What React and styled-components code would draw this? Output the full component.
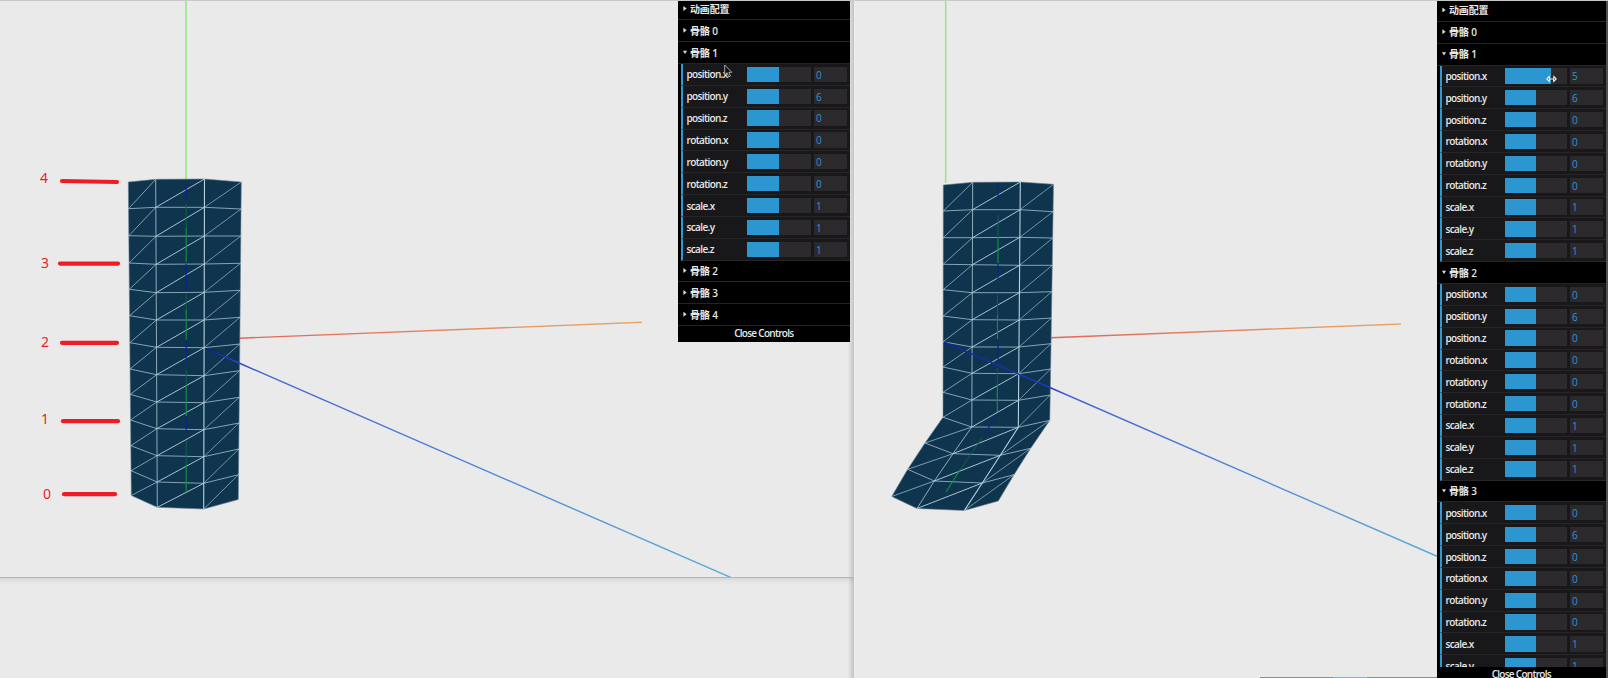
import React from 'react';
import styled, { createGlobalStyle } from 'styled-components';

const Global = createGlobalStyle`
  * { box-sizing: border-box; }
  body { margin: 0; background: #eaeaea; overflow: hidden; }
`;

const Page = styled.main`
  display: flex;
  width: 1608px;
  height: 678px;
  overflow: hidden;
  background: #eaeaea;
  font-family: 'Open Sans', 'Noto Sans CJK SC', sans-serif;
`;

const LeftColumn = styled.div`
  display: flex;
  flex-direction: column;
  width: 854px;
  background: linear-gradient(to right, transparent 848px, #c2c2c2 854px);
`;

const Viewport = styled.section`
  position: relative;
  display: flex;
  justify-content: flex-end;
  align-items: flex-start;
  width: ${(p) => p.$width}px;
  height: ${(p) => p.$height}px;
  overflow: hidden;
  border-top: 1px solid #c8c8c8;
  border-bottom: ${(p) => (p.$framed ? '1px solid #b4b4b4' : '0')};
  border-left: ${(p) => (p.$framed ? '0' : '1px solid #efefef')};
  padding-right: ${(p) => p.$edge}px;
`;

const Backdrop = styled.div`
  flex: 1;
  background: linear-gradient(rgba(0, 0, 0, 0.08), rgba(0, 0, 0, 0.02) 4px, transparent 8px);
`;

const Scene = styled.svg`
  position: absolute;
  top: -1px;
  left: ${(p) => p.$left}px;
  overflow: visible;
`;

const Edge = styled.div`
  position: absolute;
  top: 0;
  bottom: 0;
  right: 0;
  width: 2.5px;
  background: #505050;
`;

const Panel = styled.aside`
  position: relative;
  display: flex;
  flex-direction: column;
  width: ${(p) => p.$width}px;
  margin-top: ${(p) => p.$shift}px;
  background: #000;
  color: #e8e8e8;
  font-size: 10px;
  font-weight: 600;
`;

const Rows = styled.div`
  height: ${(p) => p.$height};
  overflow: hidden;
`;

const FolderTitle = styled.div`
  display: flex;
  align-items: center;
  height: 21.85px;
  padding: 0 0 1px 5px;
  gap: 3px;
  background: #000;
  border-bottom: 1px solid #242424;
  white-space: pre;
  letter-spacing: -0.15px;
`;

const Arrow = styled.i`
  width: 4px;
  height: 5px;
  background: #ddd;
  clip-path: ${(p) => (p.$open ? 'polygon(0 25%, 100% 25%, 50% 90%)' : 'polygon(10% 0, 90% 50%, 10% 100%)')};
`;

const ControlRow = styled.div`
  display: flex;
  align-items: center;
  height: 21.85px;
  margin-left: ${(p) => p.$indent}px;
  padding-left: 4px;
  border-left: 2px solid #2d9ad2;
  border-bottom: 1px solid #262628;
  background: #18181a;
`;

const Label = styled.span`
  width: ${(p) => p.$width}px;
  letter-spacing: -0.62px;
`;

const Slider = styled.div`
  width: ${(p) => p.$width}px;
  height: 15.3px;
  background: #2c2a2d;
`;

const Fill = styled.div`
  height: 100%;
  background: #2b96d0;
`;

const Value = styled.div`
  width: 33px;
  height: 15.3px;
  margin-left: 3px;
  padding-left: 2px;
  background: #2b292c;
  color: #2d97cc;
  line-height: 16.5px;
  font-weight: 400;
`;

const CloseButton = styled.div`
  height: 15.5px;
  line-height: 15px;
  text-align: center;
  letter-spacing: -0.72px;
`;

const BehindWindow = styled.div`
  position: absolute;
  bottom: 0;
  left: 405px;
  right: 0;
  height: 1px;
  display: flex;
  background: #8d8d8d;
`;

const BehindFill = styled.i`
  width: 34px;
  height: 1px;
  margin-left: 73px;
  background: #72b6d6;
`;

const KEYS = ['position.x', 'position.y', 'position.z', 'rotation.x', 'rotation.y', 'rotation.z', 'scale.x', 'scale.y', 'scale.z'];
const BASE = [0, 6, 0, 0, 0, 0, 1, 1, 1];

function Folder({ title, values, dims }) {
  return (
    <>
      <FolderTitle><Arrow $open={!!values} />{title}</FolderTitle>
      {values && values.map((v, i) => (
        <ControlRow key={KEYS[i]} $indent={dims.indent}>
          <Label $width={dims.label}>{KEYS[i]}</Label>
          <Slider $width={dims.slider}>
            <Fill style={{ width: `${v === 5 ? 74 : 50}%` }} />
          </Slider>
          <Value>{v}</Value>
        </ControlRow>
      ))}
    </>
  );
}

const path = (pts) => 'M' + pts.map((p) => p.join(' ')).join('L');
const column = (x0, x1, ys) => ys.map((y, i) => [x0 + ((x1 - x0) * i) / (ys.length - 1), y]);

const STRAIGHT = [
  column(128.3, 131.3, [182, 208.7, 235.7, 263, 289.3, 315.7, 342.7, 369, 394.3, 420, 445.7, 470.7, 495.5]),
  column(155.7, 157.3, [179.3, 207.3, 236.3, 264.3, 292.7, 320, 347.3, 374.7, 402, 428.7, 455.7, 482, 507.3]),
  column(204.5, 203.7, [179, 207.3, 236, 264, 292.3, 320, 347.7, 375.7, 402.7, 429.7, 456.7, 483.3, 509]),
  column(241.3, 238.3, [182, 209, 236, 263.3, 290.3, 317.3, 344, 370.7, 397.3, 423, 449, 474.7, 499.5]),
];

const BENT = [
  [...column(943.3, 943, [185, 211, 237.7, 264.3, 289.7, 316, 341.7, 367, 392.3, 417.3]), [925, 443], [907.7, 469.3], [891.7, 496.5]],
  [...column(972.7, 971.8, [182.3, 209.7, 237.7, 264.7, 292.7, 319.7, 347, 373.3, 400, 427]), [953, 453.7], [934.3, 481], [917, 508.5]],
  [...column(1020.3, 1018.3, [182, 209.7, 237.3, 265.3, 292.7, 320, 347, 373.7, 400.3, 427.3]), [1000.3, 455.3], [982.3, 483], [964.3, 510.5]],
  [...column(1053.5, 1049.8, [184.3, 211.7, 238, 265.3, 291.7, 318, 343.7, 369, 395, 420.3]), [1030.7, 448.3], [1014, 474.7], [998.3, 501]],
];

function Mesh({ cols }) {
  const last = cols[0].length - 1;
  const outline = [...cols.map((c) => c[0]), ...cols[3].slice(1), cols[2][last], cols[1][last], ...cols[0].slice(1).reverse()];
  const rungs = cols[0].map((_, i) => i).filter((i) => i > 0 && i < last);
  const diagonals = (k) => cols[0].slice(1).map((_, i) => path([cols[k][i + 1], cols[k + 1][i]])).join('');
  return (
    <g fill="none">
      <path d={path(outline) + 'Z'} fill="#0e344e" stroke="#6c8393" strokeWidth="0.6" />
      <g stroke="#b9d3df" strokeWidth="1">
        <path d={rungs.map((i) => path(cols.map((c) => c[i]))).join('')} opacity="0.7" />
        <path d={diagonals(0)} opacity="0.65" />
        <path d={diagonals(1)} opacity="0.9" />
        <path d={diagonals(2)} opacity="0.6" />
        <path d={path(cols[1])} opacity="0.75" />
        <path d={path(cols[2])} strokeWidth="1.1" />
      </g>
    </g>
  );
}

const MARKS = [
  ['4', 44, 183, 62, 181, 117, 182],
  ['3', 45, 268, 60, 263.6, 118, 263.6],
  ['2', 45, 346.5, 62, 342.8, 117, 342.8],
  ['1', 45, 423.5, 63, 421.2, 118, 421.2],
  ['0', 47, 498.5, 64, 494.2, 115, 494.2],
];

function Marks() {
  return (
    <g fill="#ef1c24" fontSize="14" textAnchor="middle" fontFamily="'Noto Sans', sans-serif">
      {MARKS.map(([t, x, y, x1, y1, x2, y2]) => (
        <g key={t}>
          <text x={x} y={y}>{t}</text>
          <line x1={x1} y1={y1} x2={x2} y2={y2} stroke="#ef1c24" strokeWidth="4.2" strokeLinecap="round" />
        </g>
      ))}
    </g>
  );
}

function Gradients() {
  return (
    <defs>
      <linearGradient id="redL" gradientUnits="userSpaceOnUse" x1="241" y1="0" x2="641" y2="0">
        <stop offset="0" stopColor="#e2665c" /><stop offset="1" stopColor="#e9a765" />
      </linearGradient>
      <linearGradient id="blueL" gradientUnits="userSpaceOnUse" x1="209" y1="0" x2="732" y2="0">
        <stop offset="0" stopColor="#0f2398" /><stop offset="0.06" stopColor="#2a44c8" /><stop offset="0.1" stopColor="#4464d4" /><stop offset="1" stopColor="#5bacd8" />
      </linearGradient>
      <linearGradient id="redR" gradientUnits="userSpaceOnUse" x1="1051" y1="0" x2="1401" y2="0">
        <stop offset="0" stopColor="#e2665c" /><stop offset="1" stopColor="#e9a765" />
      </linearGradient>
      <linearGradient id="blueR" gradientUnits="userSpaceOnUse" x1="943" y1="0" x2="1440" y2="0">
        <stop offset="0" stopColor="#0f2398" /><stop offset="0.21" stopColor="#2038c0" /><stop offset="0.25" stopColor="#4464d4" /><stop offset="1" stopColor="#5bacd8" />
      </linearGradient>
    </defs>
  );
}

function LeftScene() {
  return (
    <Scene $left={0} width="854" height="578">
      <Gradients />
      <path d="M186 0V179" stroke="#8deb78" strokeWidth="1.5" />
      <Mesh cols={STRAIGHT} />
      <path d="M186.2 184V200M186.2 264V290M186.2 341V363M186.2 417V432" stroke="#0c2490" strokeWidth="1.2" />
      <path d="M186.2 228V262M186.2 310V340M186.2 385V416M186.2 465V492" stroke="#148c40" strokeWidth="1.2" />
      <path d="M186.2 204V228M186.2 294V310M186.2 370V385M186.2 440V465" stroke="#13604a" strokeWidth="1" />
      <path d="M240 338.2L642 322.3" stroke="url(#redL)" strokeWidth="1.4" />
      <path d="M208 349.5L239 363L732 578" fill="none" stroke="url(#blueL)" strokeWidth="1.4" />
      <Marks />
    </Scene>
  );
}

function RightScene() {
  return (
    <Scene $left={-855} width="1608" height="678">
      <path d="M945.7 0V183" stroke="#8deb78" strokeWidth="1.5" />
      <Mesh cols={BENT} />
      <path d="M998 184V200M998 264V280M998 341V363M996 417L984 434" stroke="#0c2490" strokeWidth="1.2" />
      <path d="M998 238V263M997.5 315V339M997.3 385V412M960 470L946 492" stroke="#148c40" strokeWidth="1.2" />
      <path d="M998 215V238M997.5 295V315M997.3 368V385M982 438L960 470" stroke="#13604a" strokeWidth="1" />
      <path d="M1051 337.7L1401 324" stroke="url(#redR)" strokeWidth="1.4" />
      <path d="M944 342L1051 388L1441 558" fill="none" stroke="url(#blueR)" strokeWidth="1.4" />
    </Scene>
  );
}

const Cursor = styled.svg`
  position: absolute;
  left: ${(p) => p.$x}px;
  top: ${(p) => p.$y}px;
`;

export default function App() {
  const left = { indent: 2.5, label: 60.5, slider: 64 };
  const right = { indent: 2.5, label: 59.5, slider: 62 };
  const moved = [5, ...BASE.slice(1)];
  return (
    <Page>
      <Global />
      <LeftColumn>
        <Viewport $width={854} $height={578} $edge={4.5} $framed>
          <LeftScene />
          <Panel $width={171.5} $shift={-2.5}>
            <Folder title="动画配置" />
            <Folder title="骨骼 0" />
            <Folder title="骨骼 1" values={BASE} dims={left} />
            <Folder title="骨骼 2" />
            <Folder title="骨骼 3" />
            <Folder title="骨骼 4" />
            <CloseButton>Close Controls</CloseButton>
            <Cursor $x={46} $y={65} width="9" height="15" viewBox="0 0 9 15">
              <path d="M.7 1V11L3 8.7L4.8 12.8L6.5 12L4.8 8.3H7.8Z" fill="#111" stroke="#aaa" strokeWidth="1" />
            </Cursor>
          </Panel>
        </Viewport>
        <Backdrop />
      </LeftColumn>
      <Viewport $width={754} $height={678} $edge={2.5}>
        <RightScene />
        <BehindWindow><BehindFill /></BehindWindow>
        <Edge />
        <Panel $width={168.5} $shift={-1}>
          <Rows $height="667.3px">
            <Folder title="动画配置" />
            <Folder title="骨骼 0" />
            <Folder title="骨骼 1" values={moved} dims={right} />
            <Folder title="骨骼 2" values={BASE} dims={right} />
            <Folder title="骨骼 3" values={BASE} dims={right} />
          </Rows>
          <CloseButton>Close Controls</CloseButton>
          <Cursor $x={109} $y={75} width="11" height="8" viewBox="0 0 11 8">
            <path d="M3 4H8M3.2 1.5L.8 4L3.2 6.5ZM7.8 1.5L10.2 4L7.8 6.5Z" fill="#222" stroke="#eee" strokeWidth="1.1" />
          </Cursor>
        </Panel>
      </Viewport>
    </Page>
  );
}
